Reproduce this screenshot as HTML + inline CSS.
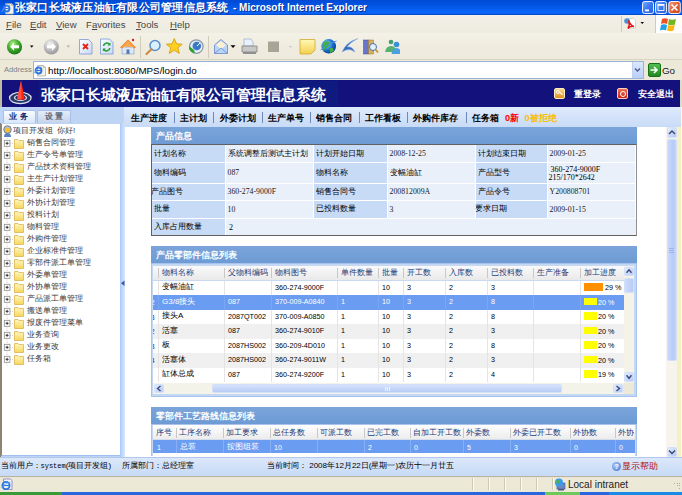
<!DOCTYPE html>
<html><head><meta charset="utf-8"><style>
*{margin:0;padding:0;box-sizing:border-box}
html,body{width:682px;height:495px;overflow:hidden;background:#fff;font-family:"Liberation Sans",sans-serif;font-size:8px;color:#000}
.a{position:absolute}
.t{white-space:nowrap;line-height:1}
.cj{font-size:8px}
.sf{font-family:"Liberation Serif",serif;font-size:7px}
</style></head><body>
<div class="a" style="left:0px;top:0px;width:682px;height:15px;background:linear-gradient(#004ad4,#0052e0 30%,#0864f6 75%,#0a66fa 88%,#0040c0)"></div>
<svg class="a" style="left:0.5px;top:1.5px" width="14" height="13" viewBox="0 0 14 13">
<path d="M4.5 1.5 h6 l2 2 v8.5 h-8z" fill="#f4f2e8" stroke="#a8a490" stroke-width="0.7"/>
<path d="M10.5 1.5 v2 h2" fill="#d8d4c0" stroke="#a8a490" stroke-width="0.5"/>
<circle cx="5.5" cy="6.5" r="3" fill="none" stroke="#2a70e0" stroke-width="1.8"/>
<path d="M2.8 6.5 h5" stroke="#2a70e0" stroke-width="1.1"/>
<path d="M0.8 9.8 q3 -6 8.5 -7" stroke="#60a8f0" stroke-width="0.8" fill="none"/>
</svg>
<div class="a t" style="left:14.8px;top:2px;color:#fff;font-weight:bold;font-size:11px;letter-spacing:0.25px;text-shadow:1px 1px 0 #0a2a90">张家口长城液压油缸有限公司管理信息系统</div>
<div class="a t" style="left:233px;top:2.5px;color:#fff;font-weight:bold;font-size:10px;text-shadow:1px 1px 0 #0a2a90">- Microsoft Internet Explorer</div>
<svg class="a" style="left:640px;top:0" width="42" height="15" viewBox="640 0 42 15">
<defs><linearGradient id="wb" x1="0" y1="0" x2="1" y2="1"><stop offset="0" stop-color="#7ab0ff"/><stop offset="0.5" stop-color="#3a78f0"/><stop offset="1" stop-color="#2a5ee0"/></linearGradient>
<linearGradient id="wc" x1="0" y1="0" x2="1" y2="1"><stop offset="0" stop-color="#f8a888"/><stop offset="0.5" stop-color="#e06038"/><stop offset="1" stop-color="#c84a20"/></linearGradient></defs>
<rect x="642.5" y="1.5" width="11" height="12" rx="2" fill="url(#wb)" stroke="#fff" stroke-width="0.9"/>
<rect x="645" y="9.5" width="4" height="1.8" fill="#fff"/>
<rect x="655.5" y="1.5" width="11" height="12" rx="2" fill="url(#wb)" stroke="#fff" stroke-width="0.9"/>
<rect x="658" y="4.5" width="6" height="6" fill="none" stroke="#fff" stroke-width="0.9"/><rect x="658" y="4.2" width="6" height="1.6" fill="#fff"/>
<rect x="668.8" y="1.5" width="11.5" height="12" rx="2" fill="url(#wc)" stroke="#fff" stroke-width="0.9"/>
<path d="M671.5 4.5 L677.5 10.5 M677.5 4.5 L671.5 10.5" stroke="#fff" stroke-width="1.6"/>
</svg>
<div class="a" style="left:0px;top:15px;width:682px;height:18px;background:linear-gradient(#f2f0e8,#eeebdf)"></div>
<div class="a t" style="left:6px;top:20px;font-size:9.6px;color:#484848;text-underline-offset:1px"><u>F</u>ile</div>
<div class="a t" style="left:30px;top:20px;font-size:9.6px;color:#484848;text-underline-offset:1px"><u>E</u>dit</div>
<div class="a t" style="left:56px;top:20px;font-size:9.6px;color:#484848;text-underline-offset:1px"><u>V</u>iew</div>
<div class="a t" style="left:86px;top:20px;font-size:9.6px;color:#484848;text-underline-offset:1px">F<u>a</u>vorites</div>
<div class="a t" style="left:136px;top:20px;font-size:9.6px;color:#484848;text-underline-offset:1px"><u>T</u>ools</div>
<div class="a t" style="left:170px;top:20px;font-size:9.6px;color:#484848;text-underline-offset:1px"><u>H</u>elp</div>
<div class="a" style="left:621px;top:16px;width:1px;height:16px;background:#d0ccb8"></div>
<div class="a" style="left:655px;top:15px;width:1px;height:18px;background:#d0ccb8"></div>
<div class="a" style="left:656px;top:15px;width:26px;height:18px;background:#fff"></div>
<svg class="a" style="left:620px;top:15px" width="62" height="18" viewBox="620 15 62 18">
<path d="M628 18.5 h5.5 l2 2 v7.5 h-7.5z" fill="#fff" stroke="#b0b0b0" stroke-width="0.5"/>
<circle cx="627" cy="21" r="2.8" fill="#4a90d8"/>
<path d="M628.5 20.5 q2 5 5.5 6 q-4 -1 -6 2 q2 -4 1 -6z" fill="none" stroke="#e01010" stroke-width="1.4"/>
<path d="M640.5 22 h3.5 l-1.75 2z" fill="#000"/>
<path d="M662 19 q3 -1.5 6 0 l-1 5 q-3 -1.5 -6 0z" fill="#f05020"/>
<path d="M669 19 q3 1.5 7 0 l-1.2 5.5 q-3 1.5 -6.8 0z" fill="#70b820"/>
<path d="M661 25 q3 -1.5 6 0 l-1 5.5 q-3 -1.5 -6 0z" fill="#20a0e8"/>
<path d="M668 25 q3 1.5 6.8 0 l-1.2 5.5 q-3 1.5 -6.6 0z" fill="#f8b810"/>
</svg>
<div class="a" style="left:0px;top:33px;width:682px;height:27px;background:linear-gradient(#f4f2e8,#efecdf 50%,#eeebde)"></div>
<div class="a" style="left:0px;top:59px;width:682px;height:1px;background:#d8d4c2"></div>
<svg class="a" style="left:0;top:33px" width="400" height="27" viewBox="0 33 400 27">
<defs>
<radialGradient id="gg" cx="40%" cy="30%" r="70%"><stop offset="0" stop-color="#b8f090"/><stop offset="0.5" stop-color="#44b030"/><stop offset="1" stop-color="#1a7a14"/></radialGradient>
<radialGradient id="gr" cx="40%" cy="30%" r="70%"><stop offset="0" stop-color="#f4f4f4"/><stop offset="0.5" stop-color="#c4c4c4"/><stop offset="1" stop-color="#9a9a9a"/></radialGradient>
<linearGradient id="pg" x1="0" y1="0" x2="1" y2="1"><stop offset="0" stop-color="#ffffff"/><stop offset="1" stop-color="#c8d8f4"/></linearGradient>
<radialGradient id="glb" cx="35%" cy="35%" r="70%"><stop offset="0" stop-color="#a0e0ff"/><stop offset="0.6" stop-color="#1a70d0"/><stop offset="1" stop-color="#0a3a90"/></radialGradient>
<linearGradient id="ny" x1="0" y1="0" x2="0" y2="1"><stop offset="0" stop-color="#fff8b8"/><stop offset="1" stop-color="#f4d050"/></linearGradient>
</defs>
<!-- back -->
<circle cx="14.5" cy="46.8" r="7.6" fill="url(#gg)"/>
<path d="M10 46.8 L14 42.8 L14 45.3 L19 45.3 L19 48.3 L14 48.3 L14 50.8 Z" fill="#fff"/>
<path d="M30 45.5 h3.5 l-1.75 2.2z" fill="#000"/>
<!-- forward -->
<circle cx="51.3" cy="46.8" r="7.6" fill="url(#gr)"/>
<path d="M56 46.8 L52 42.8 L52 45.3 L47 45.3 L47 48.3 L52 48.3 L52 50.8 Z" fill="#fff"/>
<path d="M66.5 45.5 h3.5 l-1.75 2.2z" fill="#b0b0b0"/>
<!-- stop -->
<path d="M79.5 39.5 h9 l3.5 3.5 v11 h-12.5z" fill="url(#pg)" stroke="#7a98d0" stroke-width="0.8"/>
<path d="M83 44 l5 5 M88 44 l-5 5" stroke="#e82010" stroke-width="1.8"/>
<!-- refresh -->
<path d="M100.5 39 h9 l3.5 3.5 v11.5 h-12.5z" fill="url(#pg)" stroke="#7a98d0" stroke-width="0.8"/>
<path d="M103.5 46 a3.3 3.3 0 0 1 6 -1.5" stroke="#20a030" stroke-width="1.6" fill="none"/>
<path d="M109.8 48 a3.3 3.3 0 0 1 -6 1.5" stroke="#20a030" stroke-width="1.6" fill="none"/>
<path d="M110.5 42.5 v3 h-3z M102.8 51.5 v-3 h3z" fill="#20a030"/>
<!-- home -->
<path d="M122 47 v7 h12 v-7z" fill="#dce8f8" stroke="#8098c0" stroke-width="0.6"/>
<path d="M120 47.5 L128 39.5 L136 47.5 L134 48.5 L128 42.5 L122 48.5z" fill="#f08a30"/>
<path d="M122 47 L128 41 L134 47z" fill="#f8a850"/>
<rect x="126.5" y="49.5" width="3" height="4.5" fill="#5878b0"/>
<circle cx="133" cy="40" r="1.2" fill="#d02020"/>
<rect x="140" y="36" width="1" height="22" fill="#d0ccb8"/>
<!-- search -->
<circle cx="155" cy="45.5" r="5" fill="#d8f0ff" stroke="#5a90c8" stroke-width="1.5"/>
<path d="M151.5 49.3 L146.5 54" stroke="#d08a40" stroke-width="2.2" stroke-linecap="round"/>
<!-- star -->
<path d="M174.3 38.5 L176.6 43.8 L182.2 44.2 L177.9 47.8 L179.3 53.4 L174.3 50.3 L169.3 53.4 L170.7 47.8 L166.4 44.2 L172 43.8z" fill="#ffd020" stroke="#c89000" stroke-width="0.7"/>
<!-- history -->
<circle cx="196.3" cy="46.6" r="6.8" fill="#e8eef4" stroke="#8a9aa8" stroke-width="1.2"/>
<circle cx="196.8" cy="46" r="4.3" fill="#3a78c8"/>
<path d="M197 46 L200 43" stroke="#fff" stroke-width="1"/>
<path d="M189 46 a6 6 0 0 0 6 7 l-1 -3 z" fill="#30a030"/>
<rect x="208" y="36" width="1" height="22" fill="#d0ccb8"/>
<!-- mail -->
<path d="M214.5 45 L221 39.5 L227.5 45 V53.5 H214.5z" fill="#b8d4f8" stroke="#6a88c8" stroke-width="0.8"/>
<path d="M216 45 L221 41 L226 45 L221 49z" fill="#fff2d0"/>
<path d="M214.5 53.5 L221 48 L227.5 53.5" stroke="#6a88c8" stroke-width="0.8" fill="none"/>
<path d="M230.5 45.3 h5 l-2.5 2.8z" fill="#000"/>
<!-- print -->
<path d="M244 39 h7 l2 3 v4 h-9z" fill="#eaf2ff" stroke="#8aa0c0" stroke-width="0.6"/>
<path d="M242 46 h15 v6 h-15z" fill="#c8c8c8" stroke="#808080" stroke-width="0.8"/>
<path d="M243 52 h13 v2 h-13z" fill="#909090"/>
<!-- edit -->
<rect x="268" y="41.5" width="11" height="10.5" fill="#a8a597"/>
<path d="M289 46 h3 l-1.5 1.8z" fill="#c0c0c0"/>
<!-- notes -->
<path d="M300 39.5 h15 v10.5 l-4 4 h-11z" fill="url(#ny)" stroke="#d0a830" stroke-width="0.8"/>
<!-- globe -->
<circle cx="328.7" cy="46.3" r="7.3" fill="url(#glb)"/>
<path d="M323 43 q3 -3 6 -1 q2 3 -1 5 q-3 1 -4 4 q-2 -3 -1 -8z M330 48 q3 -1 4 2 q-2 3 -4 3z" fill="#40b040"/>
<path d="M320.5 50 q6 -6 16 -9" stroke="#4a90e0" stroke-width="1" fill="none"/>
<!-- swoosh -->
<path d="M342 52 Q346 42 358 38.5 Q350 42.5 347 47 Q352 46 355 52 Q350 48.5 346 50 Z" fill="#3a6ac0" stroke="#8ab0e8" stroke-width="0.5"/>
<!-- books -->
<rect x="363.5" y="40" width="5" height="14" fill="#6a74c8" stroke="#40489a" stroke-width="0.5"/>
<rect x="368.5" y="40" width="5" height="14" fill="#d4b060" stroke="#987030" stroke-width="0.5"/>
<circle cx="373" cy="47" r="3.5" fill="#e0f0ff" stroke="#5070a0" stroke-width="1"/>
<path d="M375.5 49.5 L378 52.5" stroke="#d08a40" stroke-width="1.8"/>
<!-- msn -->
<circle cx="391" cy="42" r="2.3" fill="#40a070"/>
<circle cx="396.5" cy="44.5" r="2.8" fill="#3a90d8"/>
<path d="M385 52 q1 -6 6 -6 q4 0 5 4 v2z" fill="#58b070"/>
<path d="M391.5 54 q1 -6 5 -6 q4 0 5 6z" fill="#4aa0e0"/>
</svg>
<div class="a" style="left:0px;top:60px;width:682px;height:20px;background:#ece9d8"></div>
<div class="a t" style="left:4px;top:66px;font-size:7.6px;color:#808080">Address</div>
<div class="a" style="left:32.5px;top:61.3px;width:611px;height:17.3px;background:#fff;border:1px solid #9ab4d8"></div>
<svg class="a" style="left:33px;top:63.8px" width="14" height="13" viewBox="0 0 14 13">
<path d="M4.5 1.5 h6 l2 2 v8.5 h-8z" fill="#f4f2e8" stroke="#a8a490" stroke-width="0.7"/>
<path d="M10.5 1.5 v2 h2" fill="#d8d4c0" stroke="#a8a490" stroke-width="0.5"/>
<circle cx="5.5" cy="6.5" r="3" fill="none" stroke="#2a70e0" stroke-width="1.8"/>
<path d="M2.8 6.5 h5" stroke="#2a70e0" stroke-width="1.1"/>
<path d="M0.8 9.8 q3 -6 8.5 -7" stroke="#60a8f0" stroke-width="0.8" fill="none"/>
</svg>
<div class="a t" style="left:48px;top:65.5px;font-size:9.8px;color:#000">http://localhost:8080/MPS/login.do</div>
<div class="a" style="left:632px;top:62px;width:11px;height:16px;background:linear-gradient(#dce8fc,#b8cff8);border-left:1px solid #c0d0f0"></div>
<svg class="a" style="left:0;top:0;overflow:visible" width="1" height="1"><path d="M635 68.5 L637.5 71 L640 68.5" stroke="#4a5a8a" stroke-width="1.3" fill="none"/></svg>
<div class="a" style="left:648px;top:63px;width:13px;height:14px;background:linear-gradient(#50c050,#208a20);border-radius:2px;border:1px solid #187018"></div>
<svg class="a" style="left:0;top:0;overflow:visible" width="1" height="1"><path d="M650.5 70 h6 M654 67 l3 3 l-3 3" stroke="#fff" stroke-width="1.6" fill="none"/></svg>
<div class="a t" style="left:662px;top:65.5px;font-size:9.8px;color:#202020">Go</div>
<div class="a" style="left:0px;top:80px;width:682px;height:27px;background:#13127c"></div>
<div class="a" style="left:39px;top:81px;width:299px;height:25px;background:#0e1a80"></div>
<div class="a" style="left:0px;top:80px;width:1.5px;height:27px;background:#c0bca0"></div>
<div class="a" style="left:680px;top:80px;width:2px;height:27px;background:#dcdcc8"></div>
<svg class="a" style="left:0;top:80px" width="40" height="27" viewBox="0 80 40 27">
<ellipse cx="20.3" cy="98" rx="11.4" ry="6.2" fill="#dce4f0"/>
<ellipse cx="20.3" cy="98" rx="10.2" ry="5.1" fill="#283a68"/>
<ellipse cx="20.5" cy="97.8" rx="6.6" ry="3.2" fill="#dce4f0"/>
<ellipse cx="20.5" cy="97.8" rx="5.2" ry="2.3" fill="#202a60"/>
<path d="M21.1 80.5 L24.8 99.5 L17 99.5 Z" fill="#ff2010"/>
<path d="M21.1 80.5 L21.6 99.5 L17 99.5 Z" fill="#ff5040"/>
</svg>
<div class="a t" style="left:41px;top:87px;color:#fff;font-weight:bold;font-size:15px">张家口长城液压油缸有限公司管理信息系统</div>
<div class="a" style="left:554px;top:88px;width:11px;height:11px;background:linear-gradient(#f8d890,#e09020);border:1px solid #fff0c0;border-radius:2px"></div>
<div class="a" style="left:555.8px;top:89.8px;width:4.4px;height:4.4px;border-radius:50%;background:transparent;border:1.2px solid #fff"></div>
<div class="a" style="left:559px;top:93px;width:4px;height:1.2px;background:#fff;transform:rotate(45deg)"></div>
<div class="a t" style="left:574px;top:89.5px;color:#fff;font-weight:bold;font-size:9.3px">重登录</div>
<div class="a" style="left:617px;top:88px;width:11px;height:11px;background:linear-gradient(#f07050,#d02010);border:1px solid #ffd0c0;border-radius:2px"></div>
<div class="a" style="left:619.5px;top:90.5px;width:6px;height:6px;border-radius:50%;background:transparent;border:1px solid #fff"></div>
<div class="a t" style="left:638px;top:89.5px;color:#fff;font-weight:bold;font-size:9.3px">安全退出</div>
<div class="a" style="left:0px;top:107px;width:124px;height:350px;background:#bed4f4"></div>
<div class="a" style="left:0px;top:123px;width:1px;height:334px;background:#8a8470"></div>
<div class="a" style="left:3px;top:110px;width:33px;height:13px;background:linear-gradient(#fafcff,#d8e6fa);border:1px solid #a8c0e8;border-bottom:none;border-radius:2px 2px 0 0"></div>
<div class="a t" style="left:9px;top:112.5px;font-size:8px;font-weight:bold;color:#1a2a6a;letter-spacing:0.3px">业 务</div>
<div class="a" style="left:37px;top:110px;width:34px;height:13px;background:linear-gradient(#e4ecf8,#c4d4ec);border:1px solid #a8c0e8;border-bottom:none;border-radius:2px 2px 0 0"></div>
<div class="a t" style="left:44.5px;top:112.5px;font-size:8px;font-weight:bold;color:#606878;letter-spacing:0.3px">设 置</div>
<div class="a" style="left:1px;top:123.5px;width:119px;height:332px;background:#fff;border-left:1px solid #5a8ad8;border-bottom:1px solid #a0c0ee"></div>
<div class="a" style="left:120px;top:123px;width:5px;height:334px;background:linear-gradient(90deg,#a8c8f4,#bcd6fa 40%,#d8e8fc)"></div>
<svg class="a" style="left:2px;top:125px" width="11" height="12" viewBox="0 0 11 12">
<circle cx="5.5" cy="4.5" r="3.8" fill="#b8c0c8" stroke="#606870" stroke-width="0.8"/>
<circle cx="5.5" cy="5" r="2.2" fill="#f8c020"/>
<path d="M2 12 q0 -4 3.5 -4 q3.5 0 3.5 4z" fill="#5a80c0"/>
</svg>
<div class="a t" style="left:12.5px;top:127px;font-size:8px;color:#383838">项目开发组&nbsp; 你好!</div>
<div class="a t" style="left:27px;top:139px;font-size:8px;color:#383838">销售合同管理</div>
<div class="a t" style="left:27px;top:151px;font-size:8px;color:#383838">生产令号单管理</div>
<div class="a t" style="left:27px;top:163px;font-size:8px;color:#383838">产品技术资料管理</div>
<div class="a t" style="left:27px;top:175px;font-size:8px;color:#383838">主生产计划管理</div>
<div class="a t" style="left:27px;top:187px;font-size:8px;color:#383838">外委计划管理</div>
<div class="a t" style="left:27px;top:199px;font-size:8px;color:#383838">外协计划管理</div>
<div class="a t" style="left:27px;top:211px;font-size:8px;color:#383838">投料计划</div>
<div class="a t" style="left:27px;top:223px;font-size:8px;color:#383838">物料管理</div>
<div class="a t" style="left:27px;top:235px;font-size:8px;color:#383838">外购件管理</div>
<div class="a t" style="left:27px;top:247px;font-size:8px;color:#383838">企业标准件管理</div>
<div class="a t" style="left:27px;top:259px;font-size:8px;color:#383838">零部件派工单管理</div>
<div class="a t" style="left:27px;top:271px;font-size:8px;color:#383838">外委单管理</div>
<div class="a t" style="left:27px;top:283px;font-size:8px;color:#383838">外协单管理</div>
<div class="a t" style="left:27px;top:295px;font-size:8px;color:#383838">产品派工单管理</div>
<div class="a t" style="left:27px;top:307px;font-size:8px;color:#383838">搬送单管理</div>
<div class="a t" style="left:27px;top:319px;font-size:8px;color:#383838">报废件管理菜单</div>
<div class="a t" style="left:27px;top:331px;font-size:8px;color:#383838">业务查询</div>
<div class="a t" style="left:27px;top:343px;font-size:8px;color:#383838">业务更改</div>
<div class="a t" style="left:27px;top:355px;font-size:8px;color:#383838">任务箱</div>
<svg class="a" style="left:0;top:0" width="30" height="400" viewBox="0 0 30 400"><defs><linearGradient id="fdg" x1="0" y1="0" x2="0" y2="1"><stop offset="0" stop-color="#fff6c0"/><stop offset="1" stop-color="#f6d65a"/></linearGradient></defs><path d="M7 138 v3 M7 146.5 v3.5" stroke="#c8c8c8" stroke-width="0.8" stroke-dasharray="1 1"/><path d="M10 143.5 h4" stroke="#c8c8c8" stroke-width="0.8" stroke-dasharray="1 1"/><rect x="4.3" y="140.3" width="5.6" height="6" fill="#fff" stroke="#8c8c8c" stroke-width="0.8"/><path d="M5.6 143.3 h3 M7.1 141.8 v3" stroke="#202020" stroke-width="0.9"/><path d="M14.5 139.5 h3.5 l1 1 h4.5 v8 h-9z" fill="url(#fdg)" stroke="#dcb450" stroke-width="0.8"/><path d="M7 150 v3 M7 158.5 v3.5" stroke="#c8c8c8" stroke-width="0.8" stroke-dasharray="1 1"/><path d="M10 155.5 h4" stroke="#c8c8c8" stroke-width="0.8" stroke-dasharray="1 1"/><rect x="4.3" y="152.3" width="5.6" height="6" fill="#fff" stroke="#8c8c8c" stroke-width="0.8"/><path d="M5.6 155.3 h3 M7.1 153.8 v3" stroke="#202020" stroke-width="0.9"/><path d="M14.5 151.5 h3.5 l1 1 h4.5 v8 h-9z" fill="url(#fdg)" stroke="#dcb450" stroke-width="0.8"/><path d="M7 162 v3 M7 170.5 v3.5" stroke="#c8c8c8" stroke-width="0.8" stroke-dasharray="1 1"/><path d="M10 167.5 h4" stroke="#c8c8c8" stroke-width="0.8" stroke-dasharray="1 1"/><rect x="4.3" y="164.3" width="5.6" height="6" fill="#fff" stroke="#8c8c8c" stroke-width="0.8"/><path d="M5.6 167.3 h3 M7.1 165.8 v3" stroke="#202020" stroke-width="0.9"/><path d="M14.5 163.5 h3.5 l1 1 h4.5 v8 h-9z" fill="url(#fdg)" stroke="#dcb450" stroke-width="0.8"/><path d="M7 174 v3 M7 182.5 v3.5" stroke="#c8c8c8" stroke-width="0.8" stroke-dasharray="1 1"/><path d="M10 179.5 h4" stroke="#c8c8c8" stroke-width="0.8" stroke-dasharray="1 1"/><rect x="4.3" y="176.3" width="5.6" height="6" fill="#fff" stroke="#8c8c8c" stroke-width="0.8"/><path d="M5.6 179.3 h3 M7.1 177.8 v3" stroke="#202020" stroke-width="0.9"/><path d="M14.5 175.5 h3.5 l1 1 h4.5 v8 h-9z" fill="url(#fdg)" stroke="#dcb450" stroke-width="0.8"/><path d="M7 186 v3 M7 194.5 v3.5" stroke="#c8c8c8" stroke-width="0.8" stroke-dasharray="1 1"/><path d="M10 191.5 h4" stroke="#c8c8c8" stroke-width="0.8" stroke-dasharray="1 1"/><rect x="4.3" y="188.3" width="5.6" height="6" fill="#fff" stroke="#8c8c8c" stroke-width="0.8"/><path d="M5.6 191.3 h3 M7.1 189.8 v3" stroke="#202020" stroke-width="0.9"/><path d="M14.5 187.5 h3.5 l1 1 h4.5 v8 h-9z" fill="url(#fdg)" stroke="#dcb450" stroke-width="0.8"/><path d="M7 198 v3 M7 206.5 v3.5" stroke="#c8c8c8" stroke-width="0.8" stroke-dasharray="1 1"/><path d="M10 203.5 h4" stroke="#c8c8c8" stroke-width="0.8" stroke-dasharray="1 1"/><rect x="4.3" y="200.3" width="5.6" height="6" fill="#fff" stroke="#8c8c8c" stroke-width="0.8"/><path d="M5.6 203.3 h3 M7.1 201.8 v3" stroke="#202020" stroke-width="0.9"/><path d="M14.5 199.5 h3.5 l1 1 h4.5 v8 h-9z" fill="url(#fdg)" stroke="#dcb450" stroke-width="0.8"/><path d="M7 210 v3 M7 218.5 v3.5" stroke="#c8c8c8" stroke-width="0.8" stroke-dasharray="1 1"/><path d="M10 215.5 h4" stroke="#c8c8c8" stroke-width="0.8" stroke-dasharray="1 1"/><rect x="4.3" y="212.3" width="5.6" height="6" fill="#fff" stroke="#8c8c8c" stroke-width="0.8"/><path d="M5.6 215.3 h3 M7.1 213.8 v3" stroke="#202020" stroke-width="0.9"/><path d="M14.5 211.5 h3.5 l1 1 h4.5 v8 h-9z" fill="url(#fdg)" stroke="#dcb450" stroke-width="0.8"/><path d="M7 222 v3 M7 230.5 v3.5" stroke="#c8c8c8" stroke-width="0.8" stroke-dasharray="1 1"/><path d="M10 227.5 h4" stroke="#c8c8c8" stroke-width="0.8" stroke-dasharray="1 1"/><rect x="4.3" y="224.3" width="5.6" height="6" fill="#fff" stroke="#8c8c8c" stroke-width="0.8"/><path d="M5.6 227.3 h3 M7.1 225.8 v3" stroke="#202020" stroke-width="0.9"/><path d="M14.5 223.5 h3.5 l1 1 h4.5 v8 h-9z" fill="url(#fdg)" stroke="#dcb450" stroke-width="0.8"/><path d="M7 234 v3 M7 242.5 v3.5" stroke="#c8c8c8" stroke-width="0.8" stroke-dasharray="1 1"/><path d="M10 239.5 h4" stroke="#c8c8c8" stroke-width="0.8" stroke-dasharray="1 1"/><rect x="4.3" y="236.3" width="5.6" height="6" fill="#fff" stroke="#8c8c8c" stroke-width="0.8"/><path d="M5.6 239.3 h3 M7.1 237.8 v3" stroke="#202020" stroke-width="0.9"/><path d="M14.5 235.5 h3.5 l1 1 h4.5 v8 h-9z" fill="url(#fdg)" stroke="#dcb450" stroke-width="0.8"/><path d="M7 246 v3 M7 254.5 v3.5" stroke="#c8c8c8" stroke-width="0.8" stroke-dasharray="1 1"/><path d="M10 251.5 h4" stroke="#c8c8c8" stroke-width="0.8" stroke-dasharray="1 1"/><rect x="4.3" y="248.3" width="5.6" height="6" fill="#fff" stroke="#8c8c8c" stroke-width="0.8"/><path d="M5.6 251.3 h3 M7.1 249.8 v3" stroke="#202020" stroke-width="0.9"/><path d="M14.5 247.5 h3.5 l1 1 h4.5 v8 h-9z" fill="url(#fdg)" stroke="#dcb450" stroke-width="0.8"/><path d="M7 258 v3 M7 266.5 v3.5" stroke="#c8c8c8" stroke-width="0.8" stroke-dasharray="1 1"/><path d="M10 263.5 h4" stroke="#c8c8c8" stroke-width="0.8" stroke-dasharray="1 1"/><rect x="4.3" y="260.3" width="5.6" height="6" fill="#fff" stroke="#8c8c8c" stroke-width="0.8"/><path d="M5.6 263.3 h3 M7.1 261.8 v3" stroke="#202020" stroke-width="0.9"/><path d="M14.5 259.5 h3.5 l1 1 h4.5 v8 h-9z" fill="url(#fdg)" stroke="#dcb450" stroke-width="0.8"/><path d="M7 270 v3 M7 278.5 v3.5" stroke="#c8c8c8" stroke-width="0.8" stroke-dasharray="1 1"/><path d="M10 275.5 h4" stroke="#c8c8c8" stroke-width="0.8" stroke-dasharray="1 1"/><rect x="4.3" y="272.3" width="5.6" height="6" fill="#fff" stroke="#8c8c8c" stroke-width="0.8"/><path d="M5.6 275.3 h3 M7.1 273.8 v3" stroke="#202020" stroke-width="0.9"/><path d="M14.5 271.5 h3.5 l1 1 h4.5 v8 h-9z" fill="url(#fdg)" stroke="#dcb450" stroke-width="0.8"/><path d="M7 282 v3 M7 290.5 v3.5" stroke="#c8c8c8" stroke-width="0.8" stroke-dasharray="1 1"/><path d="M10 287.5 h4" stroke="#c8c8c8" stroke-width="0.8" stroke-dasharray="1 1"/><rect x="4.3" y="284.3" width="5.6" height="6" fill="#fff" stroke="#8c8c8c" stroke-width="0.8"/><path d="M5.6 287.3 h3 M7.1 285.8 v3" stroke="#202020" stroke-width="0.9"/><path d="M14.5 283.5 h3.5 l1 1 h4.5 v8 h-9z" fill="url(#fdg)" stroke="#dcb450" stroke-width="0.8"/><path d="M7 294 v3 M7 302.5 v3.5" stroke="#c8c8c8" stroke-width="0.8" stroke-dasharray="1 1"/><path d="M10 299.5 h4" stroke="#c8c8c8" stroke-width="0.8" stroke-dasharray="1 1"/><rect x="4.3" y="296.3" width="5.6" height="6" fill="#fff" stroke="#8c8c8c" stroke-width="0.8"/><path d="M5.6 299.3 h3 M7.1 297.8 v3" stroke="#202020" stroke-width="0.9"/><path d="M14.5 295.5 h3.5 l1 1 h4.5 v8 h-9z" fill="url(#fdg)" stroke="#dcb450" stroke-width="0.8"/><path d="M7 306 v3 M7 314.5 v3.5" stroke="#c8c8c8" stroke-width="0.8" stroke-dasharray="1 1"/><path d="M10 311.5 h4" stroke="#c8c8c8" stroke-width="0.8" stroke-dasharray="1 1"/><rect x="4.3" y="308.3" width="5.6" height="6" fill="#fff" stroke="#8c8c8c" stroke-width="0.8"/><path d="M5.6 311.3 h3 M7.1 309.8 v3" stroke="#202020" stroke-width="0.9"/><path d="M14.5 307.5 h3.5 l1 1 h4.5 v8 h-9z" fill="url(#fdg)" stroke="#dcb450" stroke-width="0.8"/><path d="M7 318 v3 M7 326.5 v3.5" stroke="#c8c8c8" stroke-width="0.8" stroke-dasharray="1 1"/><path d="M10 323.5 h4" stroke="#c8c8c8" stroke-width="0.8" stroke-dasharray="1 1"/><rect x="4.3" y="320.3" width="5.6" height="6" fill="#fff" stroke="#8c8c8c" stroke-width="0.8"/><path d="M5.6 323.3 h3 M7.1 321.8 v3" stroke="#202020" stroke-width="0.9"/><path d="M14.5 319.5 h3.5 l1 1 h4.5 v8 h-9z" fill="url(#fdg)" stroke="#dcb450" stroke-width="0.8"/><path d="M7 330 v3 M7 338.5 v3.5" stroke="#c8c8c8" stroke-width="0.8" stroke-dasharray="1 1"/><path d="M10 335.5 h4" stroke="#c8c8c8" stroke-width="0.8" stroke-dasharray="1 1"/><rect x="4.3" y="332.3" width="5.6" height="6" fill="#fff" stroke="#8c8c8c" stroke-width="0.8"/><path d="M5.6 335.3 h3 M7.1 333.8 v3" stroke="#202020" stroke-width="0.9"/><path d="M14.5 331.5 h3.5 l1 1 h4.5 v8 h-9z" fill="url(#fdg)" stroke="#dcb450" stroke-width="0.8"/><path d="M7 342 v3 M7 350.5 v3.5" stroke="#c8c8c8" stroke-width="0.8" stroke-dasharray="1 1"/><path d="M10 347.5 h4" stroke="#c8c8c8" stroke-width="0.8" stroke-dasharray="1 1"/><rect x="4.3" y="344.3" width="5.6" height="6" fill="#fff" stroke="#8c8c8c" stroke-width="0.8"/><path d="M5.6 347.3 h3 M7.1 345.8 v3" stroke="#202020" stroke-width="0.9"/><path d="M14.5 343.5 h3.5 l1 1 h4.5 v8 h-9z" fill="url(#fdg)" stroke="#dcb450" stroke-width="0.8"/><path d="M7 354 v3 M7 362.5 v3.5" stroke="#c8c8c8" stroke-width="0.8" stroke-dasharray="1 1"/><path d="M10 359.5 h4" stroke="#c8c8c8" stroke-width="0.8" stroke-dasharray="1 1"/><rect x="4.3" y="356.3" width="5.6" height="6" fill="#fff" stroke="#8c8c8c" stroke-width="0.8"/><path d="M5.6 359.3 h3 M7.1 357.8 v3" stroke="#202020" stroke-width="0.9"/><path d="M14.5 355.5 h3.5 l1 1 h4.5 v8 h-9z" fill="url(#fdg)" stroke="#dcb450" stroke-width="0.8"/></svg>
<svg class="a" style="left:0;top:0;overflow:visible" width="1" height="1"><path d="M121 283.2 L124.5 280.5 L124.5 286 Z" fill="#3a5a9a"/></svg>
<div class="a" style="left:124px;top:107px;width:558px;height:20px;background:linear-gradient(#dfeafc,#c8dbf6)"></div>
<div class="a t" style="left:131px;top:114px;font-size:9.1px;font-weight:bold;color:#000">生产进度</div>
<div class="a t" style="left:179.8px;top:114px;font-size:9.1px;font-weight:bold;color:#000">主计划</div>
<div class="a t" style="left:219.5px;top:114px;font-size:9.1px;font-weight:bold;color:#000">外委计划</div>
<div class="a t" style="left:267.7px;top:114px;font-size:9.1px;font-weight:bold;color:#000">生产单号</div>
<div class="a t" style="left:316.2px;top:114px;font-size:9.1px;font-weight:bold;color:#000">销售合同</div>
<div class="a t" style="left:364.9px;top:114px;font-size:9.1px;font-weight:bold;color:#000">工作看板</div>
<div class="a t" style="left:413px;top:114px;font-size:9.1px;font-weight:bold;color:#000">外购件库存</div>
<div class="a t" style="left:471.7px;top:114px;font-size:9.1px;font-weight:bold;color:#000">任务箱</div>
<div class="a" style="left:174px;top:112px;width:1px;height:11px;background:#7088b8"></div>
<div class="a" style="left:213px;top:112px;width:1px;height:11px;background:#7088b8"></div>
<div class="a" style="left:262px;top:112px;width:1px;height:11px;background:#7088b8"></div>
<div class="a" style="left:310px;top:112px;width:1px;height:11px;background:#7088b8"></div>
<div class="a" style="left:359px;top:112px;width:1px;height:11px;background:#7088b8"></div>
<div class="a" style="left:407px;top:112px;width:1px;height:11px;background:#7088b8"></div>
<div class="a" style="left:466px;top:112px;width:1px;height:11px;background:#7088b8"></div>
<div class="a t" style="left:505px;top:114px;font-size:9.1px;font-weight:bold;color:#f00">0新</div>
<div class="a t" style="left:524.5px;top:114px;font-size:9.1px;font-weight:bold;color:#f8c000">0被拒绝</div>
<div class="a" style="left:125px;top:127px;width:542px;height:330px;background:#fff"></div>
<div class="a" style="left:151px;top:127px;width:486px;height:17px;background:linear-gradient(#7aa4da,#6e9bd4)"></div>
<div class="a t" style="left:155.5px;top:131.6px;color:#fff;font-weight:bold;font-size:8.6px">产品信息</div>
<div class="a" style="left:151px;top:144px;width:486px;height:92px;background:#fff;border:1px solid #606060;border-right-color:#909090"></div>
<div class="a" style="left:152px;top:145px;width:73px;height:17px;background:#c8dbf6"></div>
<div class="a t" style="left:154px;top:149.5px;font-size:8px;color:#000">计划名称</div>
<div class="a" style="left:226px;top:145px;width:87px;height:17px;background:#eaf0fa"></div>
<div class="a t" style="left:228px;top:149.5px;font-size:8px">系统调整后测试主计划</div>
<div class="a" style="left:314px;top:145px;width:73px;height:17px;background:#c8dbf6"></div>
<div class="a t" style="left:316px;top:149.5px;font-size:8px;color:#000">计划开始日期</div>
<div class="a" style="left:388px;top:145px;width:87px;height:17px;background:#eaf0fa"></div>
<div class="a t" style="left:389.5px;top:150.0px;font-family:'Liberation Serif',serif;font-size:7.8px;color:#181818">2008-12-25</div>
<div class="a" style="left:476px;top:145px;width:71px;height:17px;background:#c8dbf6"></div>
<div class="a t" style="left:478px;top:149.5px;font-size:8px;color:#000">计划结束日期</div>
<div class="a" style="left:548px;top:145px;width:87px;height:17px;background:#eaf0fa"></div>
<div class="a t" style="left:549.5px;top:150.0px;font-family:'Liberation Serif',serif;font-size:7.8px;color:#181818">2009-01-25</div>
<div class="a" style="left:152px;top:163px;width:73px;height:19.5px;background:#c8dbf6"></div>
<div class="a t" style="left:154px;top:168.75px;font-size:8px;color:#000">物料编码</div>
<div class="a" style="left:226px;top:163px;width:87px;height:19.5px;background:#eaf0fa"></div>
<div class="a t" style="left:227.5px;top:169.25px;font-family:'Liberation Serif',serif;font-size:7.8px;color:#181818">087</div>
<div class="a" style="left:314px;top:163px;width:73px;height:19.5px;background:#c8dbf6"></div>
<div class="a t" style="left:316px;top:168.75px;font-size:8px;color:#000">物料名称</div>
<div class="a" style="left:388px;top:163px;width:87px;height:19.5px;background:#eaf0fa"></div>
<div class="a t" style="left:390px;top:168.75px;font-size:8px">变幅油缸</div>
<div class="a" style="left:476px;top:163px;width:71px;height:19.5px;background:#c8dbf6"></div>
<div class="a t" style="left:478px;top:168.75px;font-size:8px;color:#000">产品型号</div>
<div class="a" style="left:548px;top:163px;width:87px;height:19.5px;background:#eaf0fa"></div>
<div class="a t" style="left:550.5px;top:166.3px;font-family:'Liberation Serif',serif;font-size:8px">360-274-9000F</div>
<div class="a t" style="left:548.5px;top:173.8px;font-family:'Liberation Serif',serif;font-size:8px">215/170*2642</div>
<div class="a" style="left:152px;top:183.5px;width:73px;height:16.5px;background:#c8dbf6"></div>
<div class="a t" style="left:151px;top:187.75px;font-size:8px;color:#000">产品图号</div>
<div class="a" style="left:226px;top:183.5px;width:87px;height:16.5px;background:#eaf0fa"></div>
<div class="a t" style="left:227.5px;top:188.25px;font-family:'Liberation Serif',serif;font-size:7.8px;color:#181818">360-274-9000F</div>
<div class="a" style="left:314px;top:183.5px;width:73px;height:16.5px;background:#c8dbf6"></div>
<div class="a t" style="left:316px;top:187.75px;font-size:8px;color:#000">销售合同号</div>
<div class="a" style="left:388px;top:183.5px;width:87px;height:16.5px;background:#eaf0fa"></div>
<div class="a t" style="left:389.5px;top:188.25px;font-family:'Liberation Serif',serif;font-size:7.8px;color:#181818">200812009A</div>
<div class="a" style="left:476px;top:183.5px;width:71px;height:16.5px;background:#c8dbf6"></div>
<div class="a t" style="left:478px;top:187.75px;font-size:8px;color:#000">产品令号</div>
<div class="a" style="left:548px;top:183.5px;width:87px;height:16.5px;background:#eaf0fa"></div>
<div class="a t" style="left:549.5px;top:188.25px;font-family:'Liberation Serif',serif;font-size:7.8px;color:#181818">Y200808701</div>
<div class="a" style="left:152px;top:201px;width:73px;height:16.5px;background:#c8dbf6"></div>
<div class="a t" style="left:154px;top:205.25px;font-size:8px;color:#000">批量</div>
<div class="a" style="left:226px;top:201px;width:87px;height:16.5px;background:#eaf0fa"></div>
<div class="a t" style="left:227.5px;top:205.75px;font-family:'Liberation Serif',serif;font-size:7.8px;color:#181818">10</div>
<div class="a" style="left:314px;top:201px;width:73px;height:16.5px;background:#c8dbf6"></div>
<div class="a t" style="left:316px;top:205.25px;font-size:8px;color:#000">已投料数量</div>
<div class="a" style="left:388px;top:201px;width:87px;height:16.5px;background:#eaf0fa"></div>
<div class="a t" style="left:389.5px;top:205.75px;font-family:'Liberation Serif',serif;font-size:7.8px;color:#181818">3</div>
<div class="a" style="left:476px;top:201px;width:71px;height:16.5px;background:#c8dbf6"></div>
<div class="a t" style="left:475px;top:205.25px;font-size:8px;color:#000">要求日期</div>
<div class="a" style="left:548px;top:201px;width:87px;height:16.5px;background:#eaf0fa"></div>
<div class="a t" style="left:549.5px;top:205.75px;font-family:'Liberation Serif',serif;font-size:7.8px;color:#181818">2009-01-15</div>
<div class="a" style="left:152px;top:218.5px;width:73px;height:16.5px;background:#c8dbf6"></div>
<div class="a t" style="left:154px;top:222.75px;font-size:8px;color:#000">入库占用数量</div>
<div class="a" style="left:226px;top:218.5px;width:410px;height:16.5px;background:#eaf0fa"></div>
<div class="a t" style="left:229px;top:223.8px;font-family:'Liberation Serif',serif;font-size:8px">2</div>
<div class="a" style="left:151px;top:246px;width:486px;height:17px;background:linear-gradient(#7aa4da,#6e9bd4)"></div>
<div class="a t" style="left:155.5px;top:250.6px;color:#fff;font-weight:bold;font-size:8.6px">产品零部件信息列表</div>
<div class="a" style="left:151px;top:263px;width:486px;height:134px;background:#c4d8f4;border:1px solid #a8c4ec"></div>
<div class="a" style="left:153px;top:266px;width:471px;height:117px;background:#fff"></div>
<div class="a" style="left:153px;top:266px;width:4px;height:117px;background:#fff"></div>
<div class="a" style="left:153px;top:266px;width:471px;height:14.5px;background:linear-gradient(#fafafa,#e9e9e9);border-bottom:1px solid #c8d8f0"></div>
<div class="a t" style="left:162px;top:269px;font-size:8px;color:#1e3a78">物料名称</div>
<div class="a t" style="left:228px;top:269px;font-size:8px;color:#1e3a78">父物料编码</div>
<div class="a t" style="left:275px;top:269px;font-size:8px;color:#1e3a78">物料图号</div>
<div class="a t" style="left:341px;top:269px;font-size:8px;color:#1e3a78">单件数量</div>
<div class="a t" style="left:382px;top:269px;font-size:8px;color:#1e3a78">批量</div>
<div class="a t" style="left:407px;top:269px;font-size:8px;color:#1e3a78">开工数</div>
<div class="a t" style="left:449px;top:269px;font-size:8px;color:#1e3a78">入库数</div>
<div class="a t" style="left:491px;top:269px;font-size:8px;color:#1e3a78">已投料数</div>
<div class="a t" style="left:537px;top:269px;font-size:8px;color:#1e3a78">生产准备</div>
<div class="a t" style="left:584px;top:269px;font-size:8px;color:#1e3a78">加工进度</div>
<div class="a" style="left:158px;top:268px;width:1px;height:10px;background:#c8c8c8"></div>
<div class="a" style="left:224px;top:268px;width:1px;height:10px;background:#c8c8c8"></div>
<div class="a" style="left:271px;top:268px;width:1px;height:10px;background:#c8c8c8"></div>
<div class="a" style="left:337px;top:268px;width:1px;height:10px;background:#c8c8c8"></div>
<div class="a" style="left:378px;top:268px;width:1px;height:10px;background:#c8c8c8"></div>
<div class="a" style="left:403px;top:268px;width:1px;height:10px;background:#c8c8c8"></div>
<div class="a" style="left:445px;top:268px;width:1px;height:10px;background:#c8c8c8"></div>
<div class="a" style="left:487px;top:268px;width:1px;height:10px;background:#c8c8c8"></div>
<div class="a" style="left:533px;top:268px;width:1px;height:10px;background:#c8c8c8"></div>
<div class="a" style="left:580px;top:268px;width:1px;height:10px;background:#c8c8c8"></div>
<div class="a" style="left:153px;top:280.5px;width:471px;height:14.5px;background:#fff"></div>
<div class="a t" style="left:162px;top:283.2px;font-size:8px;color:#000">变幅油缸</div>
<div class="a t" style="left:228px;top:283.7px;font-size:7.2px;color:#000"></div>
<div class="a t" style="left:275px;top:283.7px;font-size:7.2px;color:#000">360-274-9000F</div>
<div class="a t" style="left:341px;top:283.7px;font-size:7.2px;color:#000"></div>
<div class="a t" style="left:382px;top:283.7px;font-size:7.2px;color:#000">10</div>
<div class="a t" style="left:407px;top:283.7px;font-size:7.2px;color:#000">3</div>
<div class="a t" style="left:449px;top:283.7px;font-size:7.2px;color:#000">2</div>
<div class="a t" style="left:491px;top:283.7px;font-size:7.2px;color:#000">3</div>
<div class="a t" style="left:537px;top:283.7px;font-size:7.2px;color:#000"></div>
<div class="a" style="left:158px;top:280.5px;width:1px;height:14.5px;background:#e4e4e4"></div>
<div class="a" style="left:224px;top:280.5px;width:1px;height:14.5px;background:#e4e4e4"></div>
<div class="a" style="left:271px;top:280.5px;width:1px;height:14.5px;background:#e4e4e4"></div>
<div class="a" style="left:337px;top:280.5px;width:1px;height:14.5px;background:#e4e4e4"></div>
<div class="a" style="left:378px;top:280.5px;width:1px;height:14.5px;background:#e4e4e4"></div>
<div class="a" style="left:403px;top:280.5px;width:1px;height:14.5px;background:#e4e4e4"></div>
<div class="a" style="left:445px;top:280.5px;width:1px;height:14.5px;background:#e4e4e4"></div>
<div class="a" style="left:487px;top:280.5px;width:1px;height:14.5px;background:#e4e4e4"></div>
<div class="a" style="left:533px;top:280.5px;width:1px;height:14.5px;background:#e4e4e4"></div>
<div class="a" style="left:580px;top:280.5px;width:1px;height:14.5px;background:#e4e4e4"></div>
<div class="a" style="left:584px;top:283.0px;width:19px;height:7.5px;background:#ff9000"></div>
<div class="a t" style="left:605px;top:284.2px;font-size:7.2px;color:#000">29 %</div>
<div class="a" style="left:153px;top:295.0px;width:471px;height:14.5px;background:#6a9cf2"></div>
<div class="a" style="left:153px;top:295.0px;width:3px;height:14.5px;overflow:hidden"><div class="a t" style="left:-2.5px;top:4px;font-size:7.5px;color:#fff">2</div></div>
<div class="a t" style="left:162px;top:297.7px;font-size:8px;color:#fff">G3/8接头</div>
<div class="a t" style="left:228px;top:298.2px;font-size:7.2px;color:#fff">087</div>
<div class="a t" style="left:275px;top:298.2px;font-size:7.2px;color:#fff">370-009-A0840</div>
<div class="a t" style="left:341px;top:298.2px;font-size:7.2px;color:#fff">1</div>
<div class="a t" style="left:382px;top:298.2px;font-size:7.2px;color:#fff">10</div>
<div class="a t" style="left:407px;top:298.2px;font-size:7.2px;color:#fff">3</div>
<div class="a t" style="left:449px;top:298.2px;font-size:7.2px;color:#fff">2</div>
<div class="a t" style="left:491px;top:298.2px;font-size:7.2px;color:#fff">8</div>
<div class="a t" style="left:537px;top:298.2px;font-size:7.2px;color:#fff"></div>
<div class="a" style="left:158px;top:295.0px;width:1px;height:14.5px;background:#7aa6f4"></div>
<div class="a" style="left:224px;top:295.0px;width:1px;height:14.5px;background:#7aa6f4"></div>
<div class="a" style="left:271px;top:295.0px;width:1px;height:14.5px;background:#7aa6f4"></div>
<div class="a" style="left:337px;top:295.0px;width:1px;height:14.5px;background:#7aa6f4"></div>
<div class="a" style="left:378px;top:295.0px;width:1px;height:14.5px;background:#7aa6f4"></div>
<div class="a" style="left:403px;top:295.0px;width:1px;height:14.5px;background:#7aa6f4"></div>
<div class="a" style="left:445px;top:295.0px;width:1px;height:14.5px;background:#7aa6f4"></div>
<div class="a" style="left:487px;top:295.0px;width:1px;height:14.5px;background:#7aa6f4"></div>
<div class="a" style="left:533px;top:295.0px;width:1px;height:14.5px;background:#7aa6f4"></div>
<div class="a" style="left:580px;top:295.0px;width:1px;height:14.5px;background:#7aa6f4"></div>
<div class="a" style="left:584px;top:297.5px;width:13px;height:7.5px;background:#ffff00"></div>
<div class="a t" style="left:598px;top:298.7px;font-size:7.2px;color:#fff">20 %</div>
<div class="a" style="left:153px;top:309.5px;width:471px;height:14.5px;background:#fff"></div>
<div class="a" style="left:153px;top:309.5px;width:3px;height:14.5px;overflow:hidden"><div class="a t" style="left:-2.5px;top:4px;font-size:7.5px;color:#333">3</div></div>
<div class="a t" style="left:162px;top:312.2px;font-size:8px;color:#000">接头A</div>
<div class="a t" style="left:228px;top:312.7px;font-size:7.2px;color:#000">2087QT002</div>
<div class="a t" style="left:275px;top:312.7px;font-size:7.2px;color:#000">370-009-A0850</div>
<div class="a t" style="left:341px;top:312.7px;font-size:7.2px;color:#000">1</div>
<div class="a t" style="left:382px;top:312.7px;font-size:7.2px;color:#000">10</div>
<div class="a t" style="left:407px;top:312.7px;font-size:7.2px;color:#000">3</div>
<div class="a t" style="left:449px;top:312.7px;font-size:7.2px;color:#000">2</div>
<div class="a t" style="left:491px;top:312.7px;font-size:7.2px;color:#000">8</div>
<div class="a t" style="left:537px;top:312.7px;font-size:7.2px;color:#000"></div>
<div class="a" style="left:158px;top:309.5px;width:1px;height:14.5px;background:#e4e4e4"></div>
<div class="a" style="left:224px;top:309.5px;width:1px;height:14.5px;background:#e4e4e4"></div>
<div class="a" style="left:271px;top:309.5px;width:1px;height:14.5px;background:#e4e4e4"></div>
<div class="a" style="left:337px;top:309.5px;width:1px;height:14.5px;background:#e4e4e4"></div>
<div class="a" style="left:378px;top:309.5px;width:1px;height:14.5px;background:#e4e4e4"></div>
<div class="a" style="left:403px;top:309.5px;width:1px;height:14.5px;background:#e4e4e4"></div>
<div class="a" style="left:445px;top:309.5px;width:1px;height:14.5px;background:#e4e4e4"></div>
<div class="a" style="left:487px;top:309.5px;width:1px;height:14.5px;background:#e4e4e4"></div>
<div class="a" style="left:533px;top:309.5px;width:1px;height:14.5px;background:#e4e4e4"></div>
<div class="a" style="left:580px;top:309.5px;width:1px;height:14.5px;background:#e4e4e4"></div>
<div class="a" style="left:584px;top:312.0px;width:13px;height:7.5px;background:#ffff00"></div>
<div class="a t" style="left:598px;top:313.2px;font-size:7.2px;color:#000">20 %</div>
<div class="a" style="left:153px;top:324.0px;width:471px;height:14.5px;background:#f0f0f0"></div>
<div class="a" style="left:153px;top:324.0px;width:3px;height:14.5px;overflow:hidden"><div class="a t" style="left:-2.5px;top:4px;font-size:7.5px;color:#333">2</div></div>
<div class="a t" style="left:162px;top:326.7px;font-size:8px;color:#000">活塞</div>
<div class="a t" style="left:228px;top:327.2px;font-size:7.2px;color:#000">087</div>
<div class="a t" style="left:275px;top:327.2px;font-size:7.2px;color:#000">360-274-9010F</div>
<div class="a t" style="left:341px;top:327.2px;font-size:7.2px;color:#000">1</div>
<div class="a t" style="left:382px;top:327.2px;font-size:7.2px;color:#000">10</div>
<div class="a t" style="left:407px;top:327.2px;font-size:7.2px;color:#000">3</div>
<div class="a t" style="left:449px;top:327.2px;font-size:7.2px;color:#000">2</div>
<div class="a t" style="left:491px;top:327.2px;font-size:7.2px;color:#000">3</div>
<div class="a t" style="left:537px;top:327.2px;font-size:7.2px;color:#000"></div>
<div class="a" style="left:158px;top:324.0px;width:1px;height:14.5px;background:#e4e4e4"></div>
<div class="a" style="left:224px;top:324.0px;width:1px;height:14.5px;background:#e4e4e4"></div>
<div class="a" style="left:271px;top:324.0px;width:1px;height:14.5px;background:#e4e4e4"></div>
<div class="a" style="left:337px;top:324.0px;width:1px;height:14.5px;background:#e4e4e4"></div>
<div class="a" style="left:378px;top:324.0px;width:1px;height:14.5px;background:#e4e4e4"></div>
<div class="a" style="left:403px;top:324.0px;width:1px;height:14.5px;background:#e4e4e4"></div>
<div class="a" style="left:445px;top:324.0px;width:1px;height:14.5px;background:#e4e4e4"></div>
<div class="a" style="left:487px;top:324.0px;width:1px;height:14.5px;background:#e4e4e4"></div>
<div class="a" style="left:533px;top:324.0px;width:1px;height:14.5px;background:#e4e4e4"></div>
<div class="a" style="left:580px;top:324.0px;width:1px;height:14.5px;background:#e4e4e4"></div>
<div class="a" style="left:584px;top:326.5px;width:13px;height:7.5px;background:#ffff00"></div>
<div class="a t" style="left:598px;top:327.7px;font-size:7.2px;color:#000">20 %</div>
<div class="a" style="left:153px;top:338.5px;width:471px;height:14.5px;background:#fff"></div>
<div class="a" style="left:153px;top:338.5px;width:3px;height:14.5px;overflow:hidden"><div class="a t" style="left:-2.5px;top:4px;font-size:7.5px;color:#333">3</div></div>
<div class="a t" style="left:162px;top:341.2px;font-size:8px;color:#000">板</div>
<div class="a t" style="left:228px;top:341.7px;font-size:7.2px;color:#000">2087HS002</div>
<div class="a t" style="left:275px;top:341.7px;font-size:7.2px;color:#000">360-209-4D010</div>
<div class="a t" style="left:341px;top:341.7px;font-size:7.2px;color:#000">1</div>
<div class="a t" style="left:382px;top:341.7px;font-size:7.2px;color:#000">10</div>
<div class="a t" style="left:407px;top:341.7px;font-size:7.2px;color:#000">3</div>
<div class="a t" style="left:449px;top:341.7px;font-size:7.2px;color:#000">2</div>
<div class="a t" style="left:491px;top:341.7px;font-size:7.2px;color:#000">8</div>
<div class="a t" style="left:537px;top:341.7px;font-size:7.2px;color:#000"></div>
<div class="a" style="left:158px;top:338.5px;width:1px;height:14.5px;background:#e4e4e4"></div>
<div class="a" style="left:224px;top:338.5px;width:1px;height:14.5px;background:#e4e4e4"></div>
<div class="a" style="left:271px;top:338.5px;width:1px;height:14.5px;background:#e4e4e4"></div>
<div class="a" style="left:337px;top:338.5px;width:1px;height:14.5px;background:#e4e4e4"></div>
<div class="a" style="left:378px;top:338.5px;width:1px;height:14.5px;background:#e4e4e4"></div>
<div class="a" style="left:403px;top:338.5px;width:1px;height:14.5px;background:#e4e4e4"></div>
<div class="a" style="left:445px;top:338.5px;width:1px;height:14.5px;background:#e4e4e4"></div>
<div class="a" style="left:487px;top:338.5px;width:1px;height:14.5px;background:#e4e4e4"></div>
<div class="a" style="left:533px;top:338.5px;width:1px;height:14.5px;background:#e4e4e4"></div>
<div class="a" style="left:580px;top:338.5px;width:1px;height:14.5px;background:#e4e4e4"></div>
<div class="a" style="left:584px;top:341.0px;width:13px;height:7.5px;background:#ffff00"></div>
<div class="a t" style="left:598px;top:342.2px;font-size:7.2px;color:#000">20 %</div>
<div class="a" style="left:153px;top:353.0px;width:471px;height:14.5px;background:#f0f0f0"></div>
<div class="a" style="left:153px;top:353.0px;width:3px;height:14.5px;overflow:hidden"><div class="a t" style="left:-2.5px;top:4px;font-size:7.5px;color:#333">4</div></div>
<div class="a t" style="left:162px;top:355.7px;font-size:8px;color:#000">活塞体</div>
<div class="a t" style="left:228px;top:356.2px;font-size:7.2px;color:#000">2087HS002</div>
<div class="a t" style="left:275px;top:356.2px;font-size:7.2px;color:#000">360-274-9011W</div>
<div class="a t" style="left:341px;top:356.2px;font-size:7.2px;color:#000">1</div>
<div class="a t" style="left:382px;top:356.2px;font-size:7.2px;color:#000">10</div>
<div class="a t" style="left:407px;top:356.2px;font-size:7.2px;color:#000">3</div>
<div class="a t" style="left:449px;top:356.2px;font-size:7.2px;color:#000">2</div>
<div class="a t" style="left:491px;top:356.2px;font-size:7.2px;color:#000">3</div>
<div class="a t" style="left:537px;top:356.2px;font-size:7.2px;color:#000"></div>
<div class="a" style="left:158px;top:353.0px;width:1px;height:14.5px;background:#e4e4e4"></div>
<div class="a" style="left:224px;top:353.0px;width:1px;height:14.5px;background:#e4e4e4"></div>
<div class="a" style="left:271px;top:353.0px;width:1px;height:14.5px;background:#e4e4e4"></div>
<div class="a" style="left:337px;top:353.0px;width:1px;height:14.5px;background:#e4e4e4"></div>
<div class="a" style="left:378px;top:353.0px;width:1px;height:14.5px;background:#e4e4e4"></div>
<div class="a" style="left:403px;top:353.0px;width:1px;height:14.5px;background:#e4e4e4"></div>
<div class="a" style="left:445px;top:353.0px;width:1px;height:14.5px;background:#e4e4e4"></div>
<div class="a" style="left:487px;top:353.0px;width:1px;height:14.5px;background:#e4e4e4"></div>
<div class="a" style="left:533px;top:353.0px;width:1px;height:14.5px;background:#e4e4e4"></div>
<div class="a" style="left:580px;top:353.0px;width:1px;height:14.5px;background:#e4e4e4"></div>
<div class="a" style="left:584px;top:355.5px;width:13px;height:7.5px;background:#ffff00"></div>
<div class="a t" style="left:598px;top:356.7px;font-size:7.2px;color:#000">20 %</div>
<div class="a" style="left:153px;top:367.5px;width:471px;height:14.5px;background:#fff"></div>
<div class="a t" style="left:162px;top:370.2px;font-size:8px;color:#000">缸体总成</div>
<div class="a t" style="left:228px;top:370.7px;font-size:7.2px;color:#000">087</div>
<div class="a t" style="left:275px;top:370.7px;font-size:7.2px;color:#000">360-274-9200F</div>
<div class="a t" style="left:341px;top:370.7px;font-size:7.2px;color:#000">1</div>
<div class="a t" style="left:382px;top:370.7px;font-size:7.2px;color:#000">10</div>
<div class="a t" style="left:407px;top:370.7px;font-size:7.2px;color:#000">3</div>
<div class="a t" style="left:449px;top:370.7px;font-size:7.2px;color:#000">2</div>
<div class="a t" style="left:491px;top:370.7px;font-size:7.2px;color:#000">4</div>
<div class="a t" style="left:537px;top:370.7px;font-size:7.2px;color:#000"></div>
<div class="a" style="left:158px;top:367.5px;width:1px;height:14.5px;background:#e4e4e4"></div>
<div class="a" style="left:224px;top:367.5px;width:1px;height:14.5px;background:#e4e4e4"></div>
<div class="a" style="left:271px;top:367.5px;width:1px;height:14.5px;background:#e4e4e4"></div>
<div class="a" style="left:337px;top:367.5px;width:1px;height:14.5px;background:#e4e4e4"></div>
<div class="a" style="left:378px;top:367.5px;width:1px;height:14.5px;background:#e4e4e4"></div>
<div class="a" style="left:403px;top:367.5px;width:1px;height:14.5px;background:#e4e4e4"></div>
<div class="a" style="left:445px;top:367.5px;width:1px;height:14.5px;background:#e4e4e4"></div>
<div class="a" style="left:487px;top:367.5px;width:1px;height:14.5px;background:#e4e4e4"></div>
<div class="a" style="left:533px;top:367.5px;width:1px;height:14.5px;background:#e4e4e4"></div>
<div class="a" style="left:580px;top:367.5px;width:1px;height:14.5px;background:#e4e4e4"></div>
<div class="a" style="left:584px;top:370.0px;width:13px;height:7.5px;background:#ffff00"></div>
<div class="a t" style="left:598px;top:371.2px;font-size:7.2px;color:#000">19 %</div>
<div class="a" style="left:624px;top:266px;width:10px;height:117px;background:#f4f3ea"></div>
<div class="a" style="left:624px;top:266.5px;width:10px;height:9.5px;background:linear-gradient(135deg,#e4ecfe,#b8cbf6);border:1px solid #d4e0fa;border-radius:1.5px"></div>
<svg class="a" style="left:0;top:0;overflow:visible" width="1" height="1"><path d="M626.5 272.8 L629 269.8 L631.5 272.8" stroke="#3a4a78" stroke-width="1.4" fill="none"/></svg>
<div class="a" style="left:624px;top:277.5px;width:10px;height:15.5px;background:linear-gradient(90deg,#cddcfc,#b8ccf6);border:1px solid #d4e0fa;border-radius:1.5px"></div>
<div class="a" style="left:624px;top:372px;width:10px;height:9.5px;background:linear-gradient(135deg,#e4ecfe,#b8cbf6);border:1px solid #d4e0fa;border-radius:1.5px"></div>
<svg class="a" style="left:0;top:0;overflow:visible" width="1" height="1"><path d="M626.5 375.3 L629 378.3 L631.5 375.3" stroke="#3a4a78" stroke-width="1.4" fill="none"/></svg>
<div class="a" style="left:153px;top:382.5px;width:471px;height:11px;background:#f4f3ea"></div>
<div class="a" style="left:154px;top:384px;width:10px;height:9px;background:linear-gradient(135deg,#e4ecfe,#b8cbf6);border:1px solid #d4e0fa;border-radius:1.5px"></div>
<svg class="a" style="left:0;top:0;overflow:visible" width="1" height="1"><path d="M160.5 386.0 L157.5 388.5 L160.5 391.0" stroke="#3a4a78" stroke-width="1.4" fill="none"/></svg>
<div class="a" style="left:212px;top:384px;width:350px;height:9px;background:linear-gradient(#d4e2fc,#b8ccf6);border:1px solid #d4e0fa;border-radius:1.5px"></div>
<div class="a" style="left:385px;top:386.5px;width:1px;height:4px;background:#eef3fe"></div>
<div class="a" style="left:387px;top:386.5px;width:1px;height:4px;background:#eef3fe"></div>
<div class="a" style="left:389px;top:386.5px;width:1px;height:4px;background:#eef3fe"></div>
<div class="a" style="left:613px;top:384px;width:9.5px;height:9px;background:linear-gradient(135deg,#e4ecfe,#b8cbf6);border:1px solid #d4e0fa;border-radius:1.5px"></div>
<svg class="a" style="left:0;top:0;overflow:visible" width="1" height="1"><path d="M616.5 386.0 L619.5 388.5 L616.5 391.0" stroke="#3a4a78" stroke-width="1.4" fill="none"/></svg>
<div class="a" style="left:623px;top:382.5px;width:11px;height:11px;background:#ece9d8"></div>
<div class="a" style="left:151px;top:407px;width:486px;height:17px;background:linear-gradient(#7aa4da,#6e9bd4)"></div>
<div class="a t" style="left:155.5px;top:411.6px;color:#fff;font-weight:bold;font-size:8.6px">零部件工艺路线信息列表</div>
<div class="a" style="left:151px;top:424px;width:486px;height:32px;background:#c4d8f4;border:1px solid #a8c4ec;border-bottom:none"></div>
<div class="a" style="left:153px;top:425px;width:482px;height:31px;background:#fff"></div>
<div class="a" style="left:153px;top:425.5px;width:482px;height:14.8px;background:linear-gradient(#fdfdfd,#ececec);border-bottom:1px solid #d4dcea"></div>
<div class="a" style="left:153px;top:440.3px;width:482px;height:13.2px;background:#6a9cf2"></div>
<div class="a t" style="left:156px;top:429px;font-size:8px;color:#1e3a78">序号</div>
<div class="a t" style="left:157px;top:444px;font-size:7px;color:#fff">1</div>
<div class="a t" style="left:179px;top:429px;font-size:8px;color:#1e3a78">工序名称</div>
<div class="a t" style="left:180px;top:443px;font-size:8px;color:#fff">总装</div>
<div class="a t" style="left:226px;top:429px;font-size:8px;color:#1e3a78">加工要求</div>
<div class="a t" style="left:227px;top:443px;font-size:8px;color:#fff">按图组装</div>
<div class="a t" style="left:273px;top:429px;font-size:8px;color:#1e3a78">总任务数</div>
<div class="a t" style="left:274px;top:444px;font-size:7px;color:#fff">10</div>
<div class="a t" style="left:320px;top:429px;font-size:8px;color:#1e3a78">可派工数</div>
<div class="a t" style="left:321px;top:444px;font-size:7px;color:#fff"></div>
<div class="a t" style="left:367px;top:429px;font-size:8px;color:#1e3a78">已完工数</div>
<div class="a t" style="left:368px;top:444px;font-size:7px;color:#fff">2</div>
<div class="a t" style="left:413px;top:429px;font-size:8px;color:#1e3a78">自加工开工数</div>
<div class="a t" style="left:414px;top:444px;font-size:7px;color:#fff">0</div>
<div class="a t" style="left:466px;top:429px;font-size:8px;color:#1e3a78">外委数</div>
<div class="a t" style="left:467px;top:444px;font-size:7px;color:#fff">5</div>
<div class="a t" style="left:513px;top:429px;font-size:8px;color:#1e3a78">外委已开工数</div>
<div class="a t" style="left:514px;top:444px;font-size:7px;color:#fff">3</div>
<div class="a t" style="left:573px;top:429px;font-size:8px;color:#1e3a78">外协数</div>
<div class="a t" style="left:574px;top:444px;font-size:7px;color:#fff">0</div>
<div class="a t" style="left:618px;top:429px;font-size:8px;color:#1e3a78">外协</div>
<div class="a t" style="left:619px;top:444px;font-size:7px;color:#fff">0</div>
<div class="a" style="left:176px;top:428px;width:1px;height:10px;background:#c8c8c8"></div>
<div class="a" style="left:176px;top:440.3px;width:1px;height:13.2px;background:#86b0f6"></div>
<div class="a" style="left:223px;top:428px;width:1px;height:10px;background:#c8c8c8"></div>
<div class="a" style="left:223px;top:440.3px;width:1px;height:13.2px;background:#86b0f6"></div>
<div class="a" style="left:270px;top:428px;width:1px;height:10px;background:#c8c8c8"></div>
<div class="a" style="left:270px;top:440.3px;width:1px;height:13.2px;background:#86b0f6"></div>
<div class="a" style="left:317px;top:428px;width:1px;height:10px;background:#c8c8c8"></div>
<div class="a" style="left:317px;top:440.3px;width:1px;height:13.2px;background:#86b0f6"></div>
<div class="a" style="left:364px;top:428px;width:1px;height:10px;background:#c8c8c8"></div>
<div class="a" style="left:364px;top:440.3px;width:1px;height:13.2px;background:#86b0f6"></div>
<div class="a" style="left:410px;top:428px;width:1px;height:10px;background:#c8c8c8"></div>
<div class="a" style="left:410px;top:440.3px;width:1px;height:13.2px;background:#86b0f6"></div>
<div class="a" style="left:463px;top:428px;width:1px;height:10px;background:#c8c8c8"></div>
<div class="a" style="left:463px;top:440.3px;width:1px;height:13.2px;background:#86b0f6"></div>
<div class="a" style="left:510px;top:428px;width:1px;height:10px;background:#c8c8c8"></div>
<div class="a" style="left:510px;top:440.3px;width:1px;height:13.2px;background:#86b0f6"></div>
<div class="a" style="left:570px;top:428px;width:1px;height:10px;background:#c8c8c8"></div>
<div class="a" style="left:570px;top:440.3px;width:1px;height:13.2px;background:#86b0f6"></div>
<div class="a" style="left:615px;top:428px;width:1px;height:10px;background:#c8c8c8"></div>
<div class="a" style="left:615px;top:440.3px;width:1px;height:13.2px;background:#86b0f6"></div>
<div class="a" style="left:666px;top:127px;width:11px;height:330px;background:#f6f4ec"></div>
<div class="a" style="left:677px;top:127px;width:3.5px;height:330px;background:#f4f2c4"></div>
<div class="a" style="left:680.5px;top:107px;width:1.5px;height:350px;background:#fafaf0"></div>
<div class="a" style="left:667px;top:127.3px;width:10px;height:10.3px;background:linear-gradient(135deg,#e4ecfe,#b8cbf6);border:1px solid #d4e0fa;border-radius:1.5px"></div>
<svg class="a" style="left:0;top:0;overflow:visible" width="1" height="1"><path d="M669.0 134.1 L672 130.9 L675.0 134.1" stroke="#3a4a78" stroke-width="1.4" fill="none"/></svg>
<div class="a" style="left:667px;top:138.5px;width:10px;height:222.7px;background:linear-gradient(90deg,#cad9fc,#b6cbf8 70%,#c8d6f8);border:1px solid #d4e0fa;border-radius:1.5px"></div>
<div class="a" style="left:667px;top:446.8px;width:10px;height:10.5px;background:linear-gradient(135deg,#e4ecfe,#b8cbf6);border:1px solid #d4e0fa;border-radius:1.5px"></div>
<svg class="a" style="left:0;top:0;overflow:visible" width="1" height="1"><path d="M669.0 450.4 L672 453.6 L675.0 450.4" stroke="#3a4a78" stroke-width="1.4" fill="none"/></svg>
<div class="a" style="left:669px;top:247.5px;width:5px;height:1px;background:#eef3fe"></div>
<div class="a" style="left:669px;top:248.3px;width:5px;height:0.6px;background:#9ab4ec"></div>
<div class="a" style="left:669px;top:249.5px;width:5px;height:1px;background:#eef3fe"></div>
<div class="a" style="left:669px;top:250.3px;width:5px;height:0.6px;background:#9ab4ec"></div>
<div class="a" style="left:669px;top:251.5px;width:5px;height:1px;background:#eef3fe"></div>
<div class="a" style="left:669px;top:252.3px;width:5px;height:0.6px;background:#9ab4ec"></div>
<div class="a" style="left:0px;top:457px;width:682px;height:19px;background:linear-gradient(#dce8fa,#c6daf6);border-top:1px solid #b0c8ee"></div>
<div class="a t" style="left:0.5px;top:462px;font-size:8px">当前用户：<span style="font-family:'Liberation Mono',monospace;font-size:7px">system</span>(项目开发组)</div>
<div class="a t" style="left:121.5px;top:462px;font-size:8px">所属部门：总经理室</div>
<div class="a t" style="left:267px;top:462px;font-size:8px">当前时间： 2008年12月22日(星期一)农历十一月廿五</div>
<div class="a" style="left:612.0px;top:462.0px;width:9.0px;height:9.0px;border-radius:50%;background:radial-gradient(circle at 40% 40%,#b0d0ff,#3a68c8);"></div>
<div class="a t" style="left:614.5px;top:462.8px;font-size:7px;font-weight:bold;color:#fff">?</div>
<div class="a t" style="left:622px;top:462px;font-size:8.5px;color:#b01010">显示帮助</div>
<div class="a" style="left:0px;top:476px;width:682px;height:16px;background:linear-gradient(#e4e1d0,#ece9d8 20%,#ebe8d6)"></div>
<div class="a" style="left:0px;top:475.5px;width:682px;height:1px;background:#b8b4a0"></div>
<svg class="a" style="left:0;top:476px" width="20" height="16" viewBox="0 476 20 16">
<path d="M3.5 479 h7 l1.5 1.5 v9 h-8.5z" fill="#f4f4fc" stroke="#8080b8" stroke-width="0.8"/>
<circle cx="6" cy="485.5" r="3.6" fill="none" stroke="#2a78e0" stroke-width="1.8"/>
<path d="M3 485.5 h6" stroke="#2a78e0" stroke-width="1.2"/>
<path d="M1.5 488 q4 -6 9 -6" stroke="#5aa0f0" stroke-width="0.8" fill="none"/>
</svg>
<div class="a" style="left:472px;top:478px;width:1px;height:12px;background:#cdc9b4"></div>
<div class="a" style="left:473px;top:478px;width:1px;height:12px;background:#fbfaf4"></div>
<div class="a" style="left:488px;top:478px;width:1px;height:12px;background:#cdc9b4"></div>
<div class="a" style="left:489px;top:478px;width:1px;height:12px;background:#fbfaf4"></div>
<div class="a" style="left:504px;top:478px;width:1px;height:12px;background:#cdc9b4"></div>
<div class="a" style="left:505px;top:478px;width:1px;height:12px;background:#fbfaf4"></div>
<div class="a" style="left:520px;top:478px;width:1px;height:12px;background:#cdc9b4"></div>
<div class="a" style="left:521px;top:478px;width:1px;height:12px;background:#fbfaf4"></div>
<div class="a" style="left:536px;top:478px;width:1px;height:12px;background:#cdc9b4"></div>
<div class="a" style="left:537px;top:478px;width:1px;height:12px;background:#fbfaf4"></div>
<div class="a" style="left:551.5px;top:478px;width:1px;height:12px;background:#cdc9b4"></div>
<div class="a" style="left:552.5px;top:478px;width:1px;height:12px;background:#fbfaf4"></div>
<svg class="a" style="left:552px;top:476px" width="16" height="16" viewBox="552 476 16 16">
<rect x="557" y="483" width="8" height="6" fill="#6a88c0" stroke="#40508a" stroke-width="0.6"/>
<circle cx="559" cy="482.5" r="4" fill="#3a9ae8"/><path d="M556 481 q2 -2 4 0 q-1 3 -3 3z" fill="#50b050"/>
<rect x="558" y="489" width="6" height="1.5" fill="#505a80"/>
</svg>
<div class="a t" style="left:568px;top:479.5px;font-size:10px;color:#222">Local intranet</div>
<div class="a" style="left:679.0px;top:487.5px;width:1px;height:1px;background:#b0ac98"></div>
<div class="a" style="left:679.0px;top:485.0px;width:1px;height:1px;background:#b0ac98"></div>
<div class="a" style="left:676.5px;top:485.0px;width:1px;height:1px;background:#b0ac98"></div>
<div class="a" style="left:679.0px;top:482.5px;width:1px;height:1px;background:#b0ac98"></div>
<div class="a" style="left:676.5px;top:482.5px;width:1px;height:1px;background:#b0ac98"></div>
<div class="a" style="left:674.0px;top:482.5px;width:1px;height:1px;background:#b0ac98"></div>
<div class="a" style="left:0px;top:492px;width:682px;height:3px;background:#2a64de"></div>
<div class="a" style="left:0px;top:492px;width:62px;height:3px;background:#3a9a3a"></div>
<div class="a" style="left:545px;top:492px;width:35px;height:3px;background:#6ec85a"></div>
<div class="a" style="left:609px;top:492px;width:73px;height:3px;background:#1a8ae8"></div>
</body></html>
